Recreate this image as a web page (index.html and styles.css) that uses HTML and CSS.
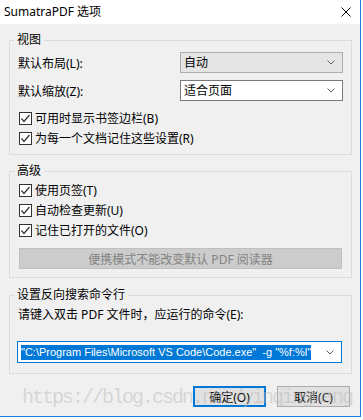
FILE: index.html
```html
<!DOCTYPE html>
<html lang="zh-CN">
<head>
    <meta charset="UTF-8">
    <title>SumatraPDF 选项</title>
    <link rel="stylesheet" href="styles.css">
</head>
<body>
    <div class="window">
        <div class="titlebar">
            <span class="title">SumatraPDF 选项</span>
            <svg class="close" width="10" height="10" viewBox="0 0 10 10">
                <path d="M0.5 0.5 L9.5 9.5 M9.5 0.5 L0.5 9.5" stroke="#000" stroke-width="1"/>
            </svg>
        </div>
        <div class="client">
            <fieldset class="group group-view">
                <legend>视图</legend>
                <div class="field-row">
                    <label>默认布局(L):</label>
                    <div class="combo combo-grey">
                        <span>自动</span>
                        <svg class="chevron" width="8" height="5" viewBox="0 0 8 5"><polyline points="0.5,0.5 4,4 7.5,0.5" fill="none" stroke="#606060"/></svg>
                    </div>
                </div>
                <div class="field-row">
                    <label>默认缩放(Z):</label>
                    <div class="combo">
                        <span>适合页面</span>
                        <svg class="chevron" width="8" height="5" viewBox="0 0 8 5"><polyline points="0.5,0.5 4,4 7.5,0.5" fill="none" stroke="#606060"/></svg>
                    </div>
                </div>
                <div class="check-row first">
                    <span class="checkbox"><svg width="11" height="11" viewBox="0 0 11 11"><polyline points="1.5,5.5 4,8.5 9.5,2" fill="none" stroke="#333" stroke-width="1.2"/></svg></span>
                    <span>可用时显示书签边栏(B)</span>
                </div>
                <div class="check-row">
                    <span class="checkbox"><svg width="11" height="11" viewBox="0 0 11 11"><polyline points="1.5,5.5 4,8.5 9.5,2" fill="none" stroke="#333" stroke-width="1.2"/></svg></span>
                    <span>为每一个文档记住这些设置(R)</span>
                </div>
            </fieldset>

            <fieldset class="group group-advanced">
                <legend>高级</legend>
                <div class="check-row">
                    <span class="checkbox"><svg width="11" height="11" viewBox="0 0 11 11"><polyline points="1.5,5.5 4,8.5 9.5,2" fill="none" stroke="#333" stroke-width="1.2"/></svg></span>
                    <span>使用页签(T)</span>
                </div>
                <div class="check-row">
                    <span class="checkbox"><svg width="11" height="11" viewBox="0 0 11 11"><polyline points="1.5,5.5 4,8.5 9.5,2" fill="none" stroke="#333" stroke-width="1.2"/></svg></span>
                    <span>自动检查更新(U)</span>
                </div>
                <div class="check-row">
                    <span class="checkbox"><svg width="11" height="11" viewBox="0 0 11 11"><polyline points="1.5,5.5 4,8.5 9.5,2" fill="none" stroke="#333" stroke-width="1.2"/></svg></span>
                    <span>记住已打开的文件(O)</span>
                </div>
                <button class="btn-disabled" disabled>便携模式不能改变默认 PDF 阅读器</button>
            </fieldset>

            <fieldset class="group group-search">
                <legend>设置反向搜索命令行</legend>
                <div class="search-label">请键入双击 PDF 文件时，应运行的命令(E):</div>
                <div class="combo combo-focus">
                    <span class="selected">"C:\Program Files\Microsoft VS Code\Code.exe"  -g "%f:%l"</span>
                    <svg class="chevron" width="8" height="5" viewBox="0 0 8 5"><polyline points="0.5,0.5 4,4 7.5,0.5" fill="none" stroke="#606060"/></svg>
                </div>
            </fieldset>

            <div class="buttons">
                <button class="btn btn-default">确定(O)</button>
                <button class="btn">取消(C)</button>
            </div>
        </div>
        <div class="watermark">https://blog.csdn.net/yinqingwang</div>
    </div>
</body>
</html>
```

FILE: styles.css
```css
/* Dialog window */
body {
    margin: 0;
    background: #ffffff;
    font-family: "Noto Sans", "Noto Sans CJK SC", sans-serif;
    font-size: 12px;
    color: #000000;
}

.window {
    position: relative;
    width: 360px;
    height: 416px;
    border-right: 1px solid #1c7ed6;
    border-bottom: 1px solid #1c7ed6;
    display: flex;
    flex-direction: column;
}

.titlebar {
    height: 24px;
    background: #ffffff;
    display: flex;
    align-items: center;
    justify-content: space-between;
    padding: 0 9px 0 4px;
}

.title {
    font-size: 12px;
    line-height: 16px;
}

.client {
    flex: 1;
    background: #f0f0f0;
    display: flex;
    flex-direction: column;
}

/* Group boxes */
.group {
    margin: 9px 8px 0 9px;
    padding: 0 8px;
    border: 1px solid #dcdcdc;
    min-width: 0;
}

.group legend {
    margin-left: -4px;
    padding: 0 3px;
    line-height: 14px;
    font-size: 12px;
}

.group-view {
    padding-top: 5px;
    padding-bottom: 6px;
}

.group-advanced {
    padding-top: 2px;
    padding-bottom: 8px;
}

.group-search {
    margin-top: 10px;
    padding-top: 5px;
    padding-bottom: 10px;
}

.field-row {
    display: flex;
    align-items: center;
    justify-content: space-between;
    height: 21px;
}

.field-row + .field-row {
    margin-top: 7px;
}

.combo {
    box-sizing: border-box;
    width: 163px;
    height: 21px;
    border: 1px solid #7a7a7a;
    background: #ffffff;
    display: flex;
    align-items: center;
    justify-content: space-between;
    padding: 0 7px 0 3px;
    line-height: 16px;
}

.combo-grey {
    background: #e5e5e5;
    border-color: #adadad;
}

.combo-focus {
    width: 325px;
    height: 22px;
    margin: 18px 0 0 -1px;
    border-color: #0078d7;
    padding-left: 3px;
}

.selected {
    background: #0078d7;
    color: #ffffff;
    font-family: "Liberation Sans", "Noto Sans CJK SC", sans-serif;
    font-size: 11px;
    line-height: 15px;
    white-space: pre;
    overflow: hidden;
}

.chevron {
    display: block;
    flex-shrink: 0;
}

/* Checkboxes */
.check-row {
    display: flex;
    align-items: center;
    height: 20px;
    margin-left: 1px;
}

.check-row.first {
    margin-top: 7px;
}

.checkbox {
    box-sizing: border-box;
    width: 13px;
    height: 13px;
    border: 1px solid #333333;
    background: #ffffff;
    margin-right: 3px;
    display: flex;
}

.btn-disabled {
    display: block;
    box-sizing: border-box;
    width: 323px;
    height: 21px;
    margin: 8px 0 0 1px;
    background: #cccccc;
    border: 1px solid #bfbfbf;
    color: #838383;
    font-family: inherit;
    font-size: 12px;
    padding: 0;
}

.search-label {
    line-height: 16px;
}

/* Bottom buttons */
.buttons {
    display: flex;
    justify-content: flex-end;
    gap: 11px;
    margin: 12px 10px 0 0;
}

.btn {
    box-sizing: border-box;
    width: 73px;
    height: 21px;
    background: #e1e1e1;
    border: 1px solid #adadad;
    font-family: inherit;
    font-size: 12px;
    padding: 0;
    color: #000000;
}

.btn-default {
    border: 2px solid #0078d7;
}

/* Blog watermark drawn over the dialog */
.watermark {
    position: absolute;
    left: 22px;
    top: 386px;
    font-family: "Liberation Mono", monospace;
    font-size: 20px;
    letter-spacing: -2px;
    color: rgba(180, 180, 180, 0.45);
    pointer-events: none;
}
```
